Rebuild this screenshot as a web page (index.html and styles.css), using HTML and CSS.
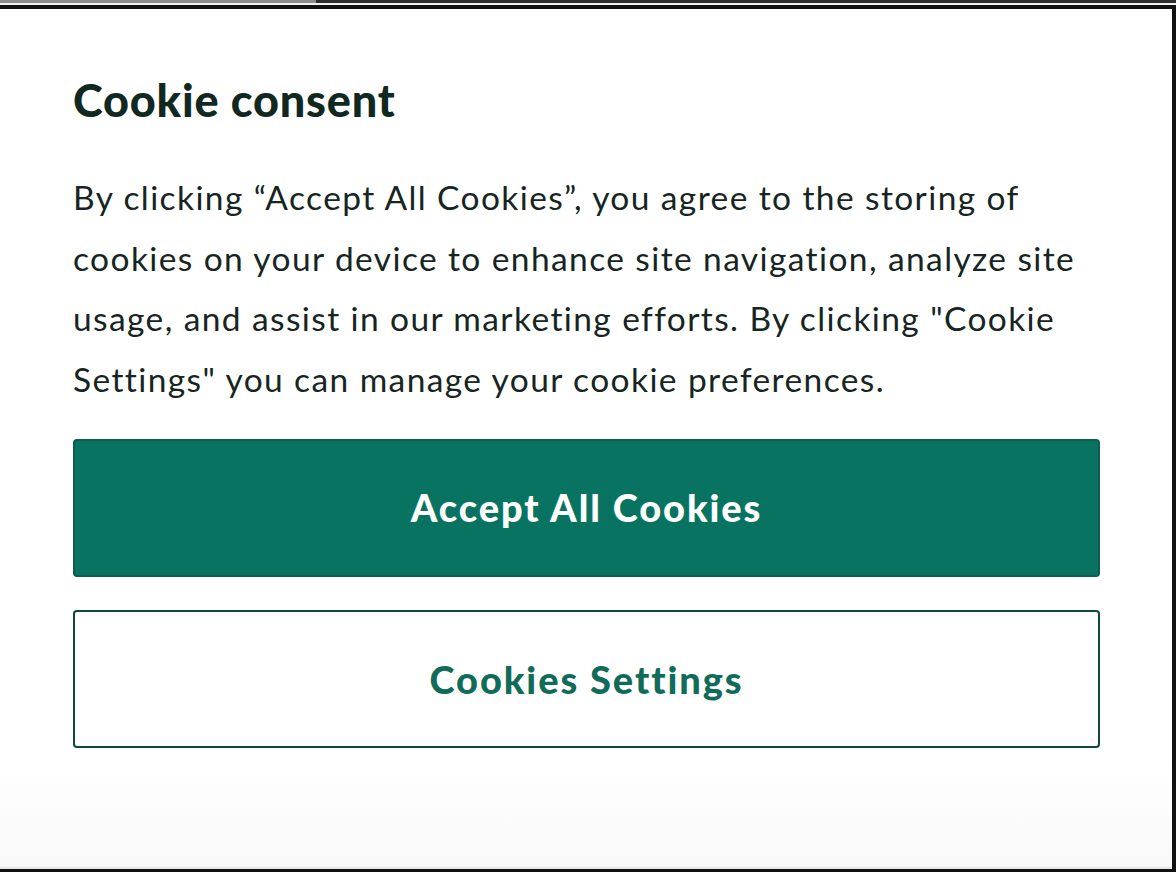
FILE: index.html
```html
<!DOCTYPE html>
<html lang="en">
<head>
<meta charset="utf-8">
<title>Cookie consent</title>
<link rel="stylesheet" href="styles.css">
</head>
<body>
<div class="topbar"><div class="topbar-left"></div><div class="topbar-right"></div></div>
<div class="gap"></div>
<section class="card">
  <h1 class="title">Cookie consent</h1>
  <p class="text">By clicking “Accept All Cookies”, you agree to the storing of cookies on your device to enhance site navigation, analyze site usage, and assist in our marketing efforts. By clicking "Cookie Settings" you can manage your cookie preferences.</p>
  <div class="actions">
    <button class="btn btn-primary">Accept All Cookies</button>
    <button class="btn btn-secondary">Cookies Settings</button>
  </div>
</section>
</body>
</html>
```
FILE: styles.css
```css
html, body {
  margin: 0;
  padding: 0;
  height: 100%;
  background: #ffffff;
}
body {
  display: flex;
  flex-direction: column;
  font-family: Lato, "Noto Sans", sans-serif;
  overflow: hidden;
}
.topbar {
  display: flex;
  height: 3px;
}
.topbar-left {
  width: 316px;
  background: #8c8c8c;
}
.topbar-right {
  flex: 1;
  background: #2e2e2e;
}
.gap {
  height: 2px;
  background: #f2f2f2;
}
.card {
  flex: 1;
  border-top: 4px solid #111111;
  border-right: 4px solid #111111;
  border-bottom: 3px solid #111111;
  box-shadow: inset 0 -2px 0 #e6e6e6;
  background: linear-gradient(to bottom, #ffffff 0, #ffffff 88%, #f8f8f8 100%);
  padding: 61px 72px 0 73px;
  color: #13261f;
}
.title {
  margin: 0;
  font-size: 45px;
  font-weight: 900;
  line-height: 60px;
  color: #10281f;
  letter-spacing: 0.8px;
}
.text {
  margin: 37px 0 0;
  font-size: 33.5px;
  line-height: 60.5px;
  letter-spacing: 1.4px;
  color: #16251f;
}
.actions {
  display: flex;
  flex-direction: column;
  gap: 33px;
  margin-top: 30px;
}
.btn {
  height: 138px;
  border-radius: 4px;
  font-family: Lato, "Noto Sans", sans-serif;
  font-weight: 900;
  font-size: 38px;
  letter-spacing: 1.9px;
  cursor: pointer;
  padding-bottom: 1px;
}
.btn-primary {
  background: #087361;
  border: 2px solid #0b5e4f;
  color: #ffffff;
  padding-bottom: 3px;
}
.btn-secondary {
  background: #ffffff;
  border: 2px solid #0e4a3c;
  color: #106c59;
}
```
